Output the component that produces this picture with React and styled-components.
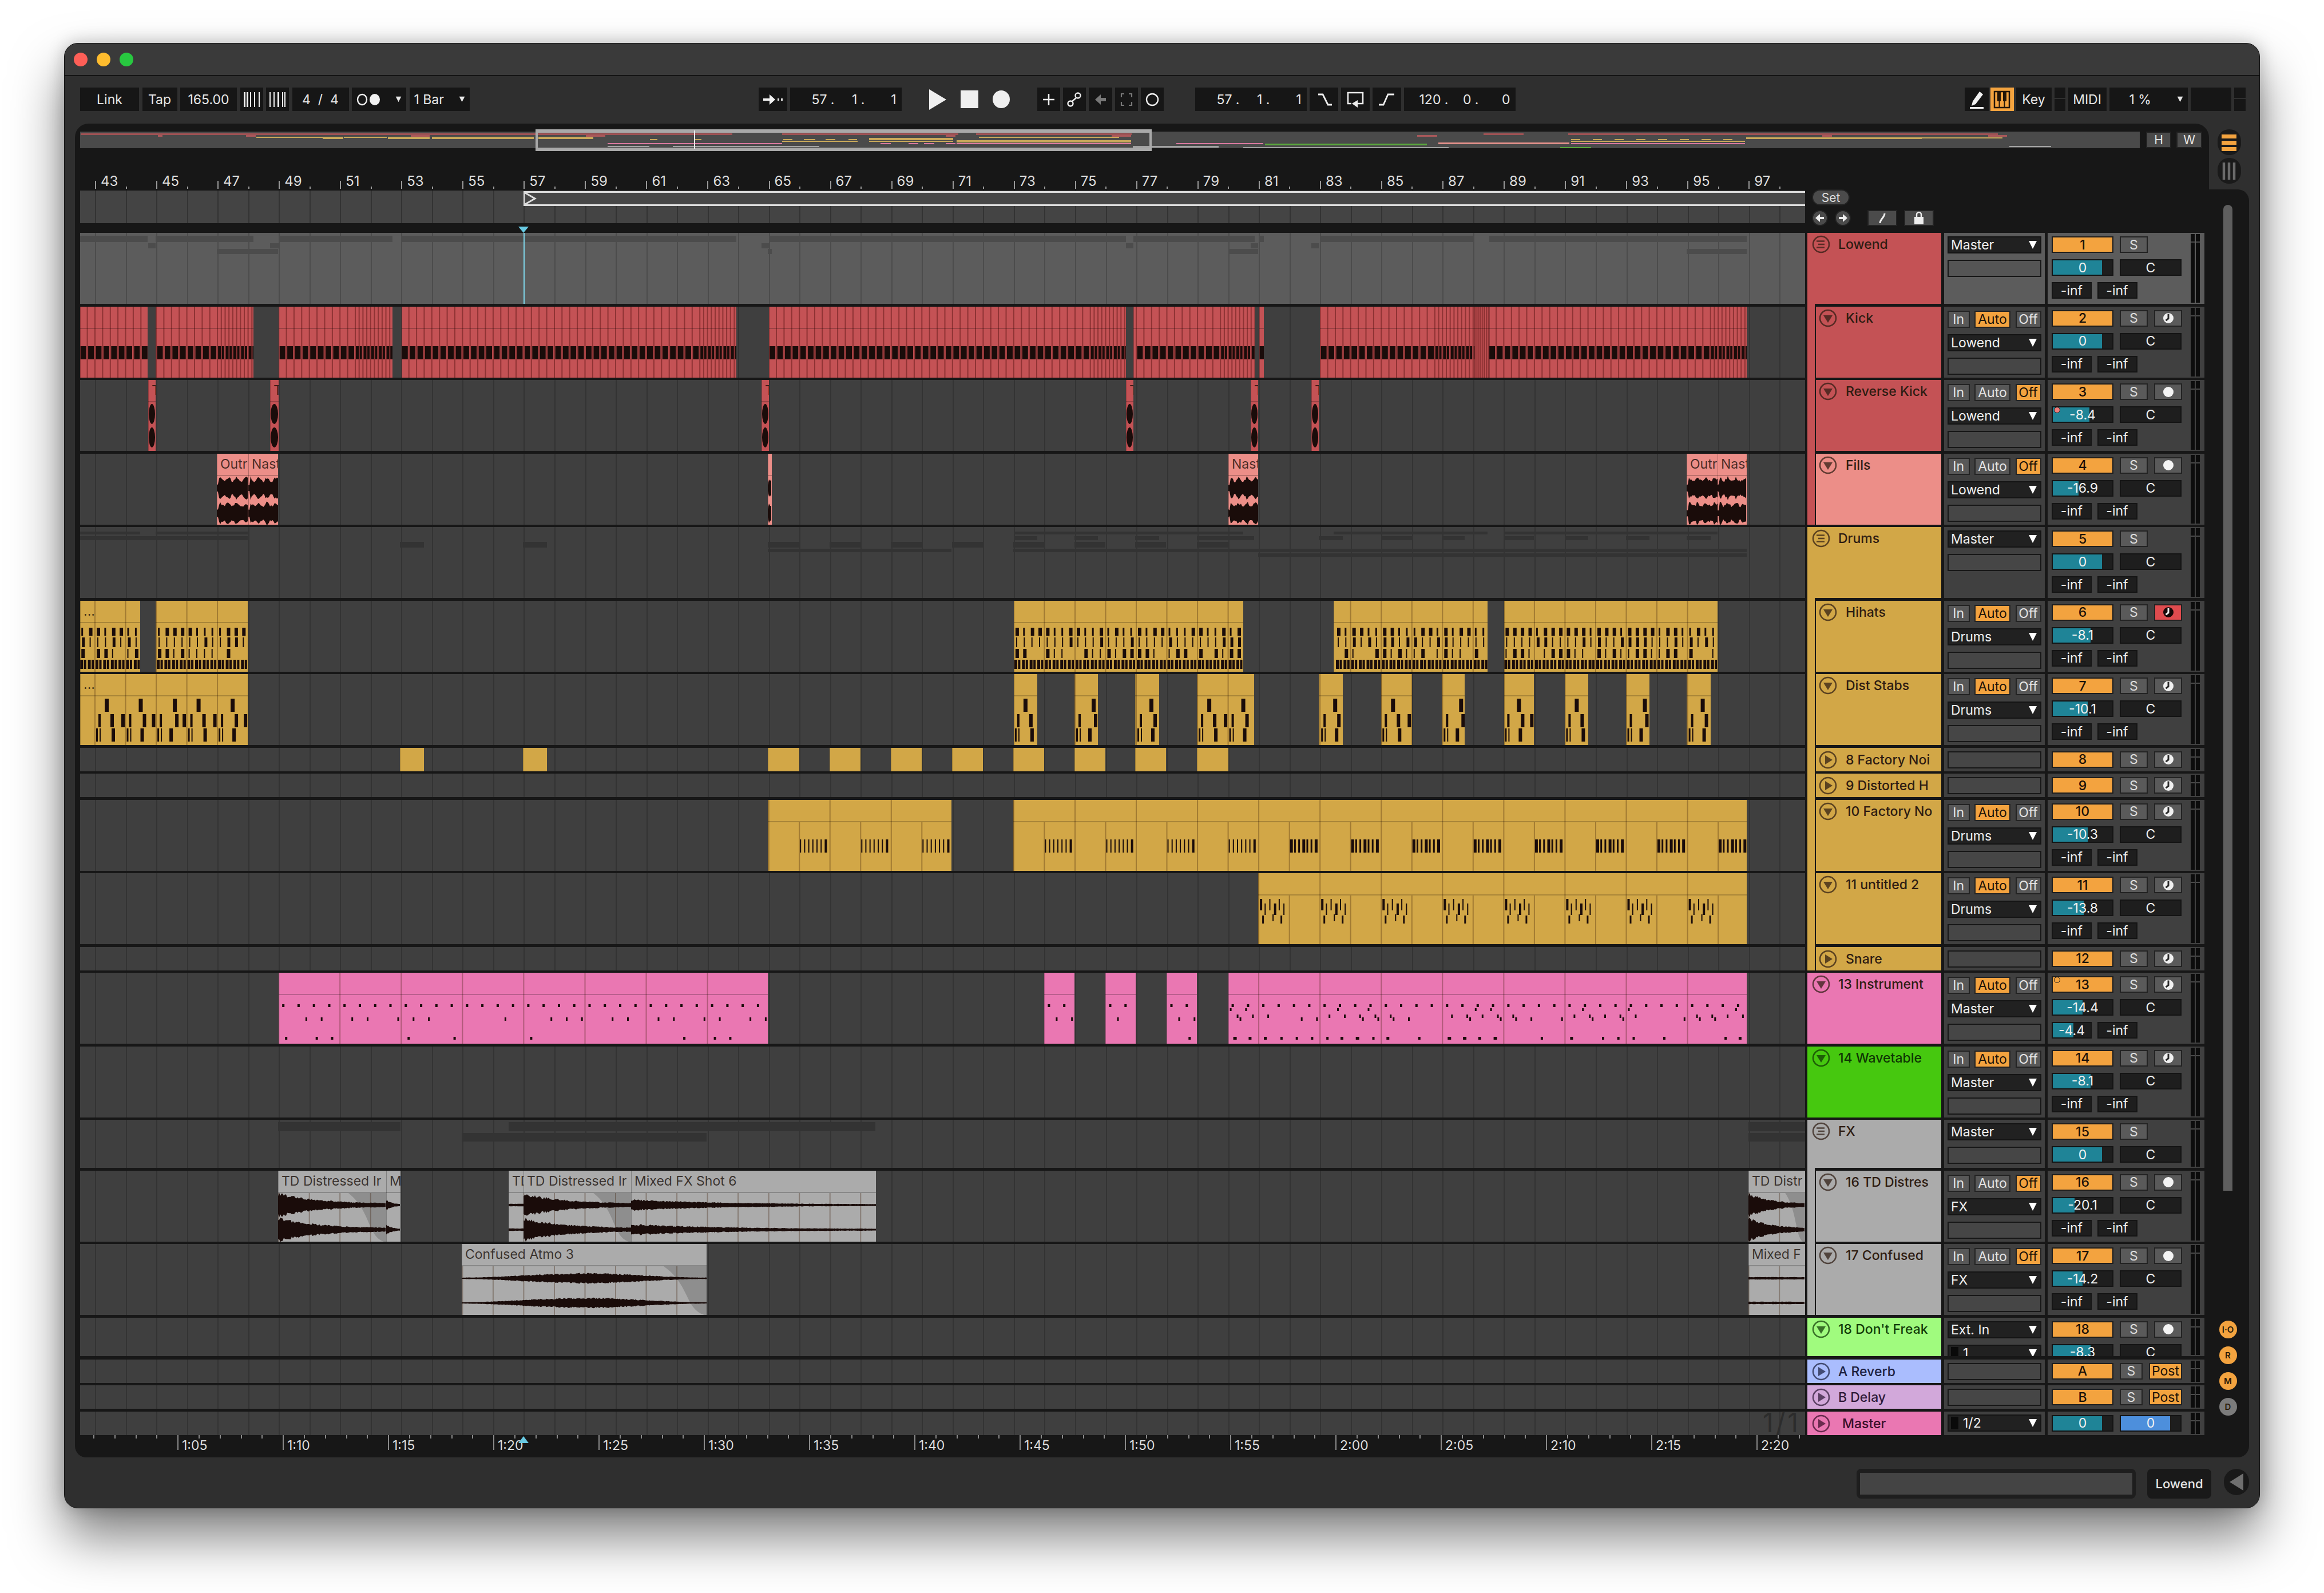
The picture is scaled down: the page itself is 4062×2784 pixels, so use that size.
import React from 'react';
import styled, { createGlobalStyle, css } from 'styled-components';

const RED = '#c45255';
const SALMON = '#ec8e88';
const GOLD = '#d2a747';
const PINK = '#ea77b2';
const GREY = '#ababab';
const ORANGE = '#f3a33f';
const TEAL = '#1f8497';
const BAR = 53.53;

const GlobalStyle = createGlobalStyle`
  html, body { margin: 0; padding: 0; background: #fff; }
  body { font-family: Inter, "Liberation Sans", sans-serif; }
  * { box-sizing: border-box; }
`;

// grid lines on a lane, one per bar, first one at page x 166
const barGrid = (line) => css`
  background-image: repeating-linear-gradient(90deg, transparent 0 ${BAR - 2}px, ${line} ${BAR - 2}px ${BAR}px);
  background-size: calc(100% + 60px) 100%;
  background-position: -25.5px 0;
  background-repeat: no-repeat;
`;

const Page = styled.div`
  width: 4062px;
  height: 2784px;
  padding: 75px 0 0 112px;
  overflow: hidden;
`;

const Window = styled.div`
  width: 3838px;
  height: 2561px;
  display: flex;
  flex-direction: column;
  background: #2f2f2f;
  border: 1px solid #151515;
  border-radius: 24px;
  box-shadow: 0 50px 90px rgba(0, 0, 0, 0.5), 0 0 30px rgba(0, 0, 0, 0.22);
  overflow: hidden;
  color: #e6e6e6;
`;

const TitleBar = styled.div`
  height: 57px;
  flex: none;
  display: flex;
  align-items: center;
  gap: 16px;
  padding-left: 16px;
  background: #3a3a3a;
  border-bottom: 2px solid #141414;
`;

const Light = styled.span`
  width: 24px;
  height: 24px;
  border-radius: 50%;
  background: ${(p) => p.$c};
`;

const Toolbar = styled.div`
  height: 83px;
  flex: none;
  display: flex;
  align-items: flex-start;
  padding: 20px 0 0 27px;
`;

const ToolGroup = styled.div`
  display: flex;
  gap: ${(p) => p.$gap || 5}px;
  margin-left: ${(p) => p.$ml || 0}px;
  height: 41px;
  align-items: center;
`;

const ToolBtn = styled.div`
  width: ${(p) => p.$w}px;
  height: 41px;
  flex: none;
  display: flex;
  align-items: center;
  justify-content: ${(p) => p.$justify || 'center'};
  gap: 4px;
  padding: ${(p) => (p.$justify ? '0 8px' : '0')};
  font-size: 23px;
  white-space: pre;
  background: ${(p) => (p.$on ? ORANGE : '#161616')};
`;

const PercentText = styled.span`
  margin-left: 27px;
`;

const PosBtn = styled(ToolBtn)`
  justify-content: flex-end;
  padding-right: 9px;
`;

const PosCell = styled.span`
  width: ${(p) => p.$w}px;
  text-align: right;
`;

const SplitBtn = styled.div`
  width: ${(p) => p.$w}px;
  height: 41px;
  flex: none;
  background: linear-gradient(#161616 0 18px, transparent 18px 20px, #161616 20px);
`;

const Main = styled.div`
  flex: 1;
  margin-left: 18px;
  width: 3800px;
  display: flex;
  flex-direction: column;
`;

const TopRow = styled.div`
  display: flex;
  height: 115px;
  flex: none;
`;

const TopPanel = styled.div`
  width: 3730px;
  padding: 14px 0 0 9px;
  background: #171717;
  border-radius: 24px 24px 0 0;
`;

const OverviewRow = styled.div`
  display: flex;
  height: 29px;
`;

const OverviewStrip = styled.div`
  position: relative;
  width: 3600px;
  height: 29px;
  background: #4a4a4a;
`;

const OverviewArt = styled.svg`
  display: block;
  width: 3600px;
  height: 29px;
`;

const Selection = styled.div`
  position: absolute;
  left: 796px;
  top: -4px;
  width: 1077px;
  height: 38px;
  border: solid #a9a9a9;
  border-width: 6px 4px;
`;

const OverviewCursor = styled.div`
  position: absolute;
  left: 1073px;
  top: -2px;
  width: 2px;
  height: 32px;
  background: #e8e8e8;
`;

const ZoomBtn = styled.div`
  width: ${(p) => p.$w}px;
  margin-left: ${(p) => p.$ml}px;
  height: 29px;
  display: flex;
  align-items: center;
  justify-content: center;
  font-size: 21px;
  background: #4a4a4a;
  border: 2px solid #222;
`;

const BarRuler = styled.div`
  display: flex;
  height: 30px;
  margin-top: 42px;
  padding-left: 26px;
`;

const BarMark = styled.div`
  position: relative;
  width: 107.06px;
  flex: none;
  padding-left: 10px;
  font-size: 24px;
  line-height: 32px;
  color: #dedede;

  &::before {
    content: '';
    position: absolute;
    left: 0;
    bottom: 1px;
    width: 2px;
    height: 14px;
    background: #9a9a9a;
  }

  &::after {
    content: '';
    position: absolute;
    left: 53.5px;
    bottom: 1px;
    width: 2px;
    height: 4px;
    background: #9a9a9a;
  }
`;

const SidePills = styled.div`
  width: 70px;
  display: flex;
  flex-direction: column;
  align-items: center;
  gap: 5px;
  padding-top: 10px;
`;

const SidePill = styled.div`
  width: 41px;
  height: 45px;
  display: flex;
  align-items: center;
  justify-content: center;
  background: #1a1a1a;
  border-radius: 20px;
`;

const LowerPanel = styled.div`
  flex: 1;
  display: flex;
  background: #171717;
  border-radius: 0 20px 20px 20px;
`;

const Tracks = styled.div`
  width: 3722px;
  flex: none;
  padding-left: 9px;
  display: flex;
  flex-direction: column;
`;

const TopStrip = styled.div`
  display: flex;
  height: 76px;
  flex: none;
`;

const LocatorArea = styled.div`
  position: relative;
  width: 3015px;
  height: 76px;
  padding-top: 2px;
`;

const LocatorStrip = styled.div`
  position: relative;
  height: 57px;
  background-color: #444;
  ${barGrid('#333')}
`;

const LoopBrace = styled.div`
  position: absolute;
  left: 775px;
  right: 0;
  top: 1px;
  height: 26px;
  background: #474747;
  border-top: 3px solid #dcdcdc;
  border-bottom: 3px solid #dcdcdc;
  display: flex;
  align-items: center;
`;

const DownMarker = styled.div`
  position: absolute;
  left: 766px;
  bottom: 0;
  width: 0;
  height: 0;
  border-left: 9px solid transparent;
  border-right: 9px solid transparent;
  border-top: 11px solid #68c9e2;
`;

const SetColumn = styled.div`
  margin-left: 12px;
  display: flex;
  flex-direction: column;
  gap: 8px;
`;

const SetPill = styled.div`
  width: 66px;
  height: 28px;
  display: flex;
  align-items: center;
  justify-content: center;
  font-size: 21px;
  color: #ddd;
  background: #4b4b4b;
  border: 2px solid #222;
  border-radius: 14px;
`;

const SetRow = styled.div`
  display: flex;
  align-items: center;
  gap: 12px;
`;

const ArrowPill = styled.div`
  width: 28px;
  height: 28px;
  display: flex;
  align-items: center;
  justify-content: center;
  background: #4b4b4b;
  border: 2px solid #222;
  border-radius: 50%;
`;

const SquareBtn = styled.div`
  width: 52px;
  height: 28px;
  margin-left: ${(p) => p.$ml || 0}px;
  display: flex;
  align-items: center;
  justify-content: center;
  background: #4b4b4b;
  border: 2px solid #222;
`;

const TrackRow = styled.div`
  display: flex;
  flex: none;
  height: ${(p) => p.$h}px;
  margin-bottom: ${(p) => p.$gap}px;
`;

const Lane = styled.div`
  position: relative;
  width: 3015px;
  flex: none;
  overflow: hidden;
  background-color: ${(p) => (p.$light ? '#5c5c5c' : '#3f3f3f')};
  ${(p) => barGrid(p.$light ? '#4c4c4c' : '#333')}
`;

const Stripe = styled.div`
  position: absolute;
  height: ${(p) => p.$h}px;
  top: ${(p) => p.$top}px;
  background: ${(p) => (p.$light ? '#4c4c4c' : '#333')};
`;

const Playhead = styled.div`
  position: absolute;
  left: 775px;
  top: 0;
  bottom: 0;
  width: 2px;
  background: #7fd4e8;
`;

const FaintText = styled.div`
  position: absolute;
  right: 8px;
  top: -5px;
  font-size: 46px;
  line-height: 48px;
  letter-spacing: 4px;
  color: #2c2c2c;
`;

const Clip = styled.div`
  position: absolute;
  top: 0;
  bottom: 0;
  overflow: hidden;
  background: ${(p) => p.$c};
  box-shadow: inset 1px 0 0 rgba(0, 0, 0, 0.25);
`;

const ClipHead = styled.div`
  position: relative;
  height: 39px;
  padding-left: 6px;
  font-size: 23px;
  line-height: 36px;
  white-space: nowrap;
  overflow: hidden;
  color: rgba(25, 15, 10, 0.78);
  border-bottom: 2px solid rgba(0, 0, 0, 0.2);
  z-index: 1;
`;

const ClipArt = styled.svg`
  position: absolute;
  left: 0;
  top: 0;
`;

const HeaderCell = styled.div`
  position: relative;
  width: 234px;
  margin-left: 4px;
  flex: none;
  display: flex;
  align-items: flex-start;
  padding: ${(p) => (p.$small ? 5 : 4)}px 0 0 ${(p) => (p.$indent ? 20 : 8)}px;
  gap: ${(p) => (p.$indent ? 15 : 14)}px;
  background: ${(p) => p.$c};
  font-size: 23px;
  font-weight: 500;
  line-height: 32px;
  white-space: nowrap;
  overflow: visible;
  color: ${(p) => p.$text || '#2e1c12'};

  ${(p) =>
    p.$indent &&
    css`
      &::before {
        content: '';
        position: absolute;
        left: 0;
        top: -5px;
        bottom: 0;
        width: 13px;
        background: ${p.$group};
        border-right: 2px solid #171717;
      }
    `}
`;

const MasterName = styled.span`
  margin-left: 7px;
`;

const RoutingCol = styled.div`
  width: 176px;
  margin-left: 5px;
  flex: none;
  padding: ${(p) => (p.$top ? p.$top : 7)}px 6px 0;
  display: flex;
  flex-direction: column;
  gap: 11px;
  overflow: hidden;
  background: ${(p) => (p.$light ? '#5c5c5c' : '#404040')};
`;

const MonitorRow = styled.div`
  display: flex;
  gap: 8.5px;
  height: 30px;
  flex: none;
`;

const Toggle = styled.div`
  width: ${(p) => p.$w}px;
  display: flex;
  align-items: center;
  justify-content: center;
  font-size: 23px;
  border: 2px solid #232323;
  background: ${(p) => (p.$on ? ORANGE : '#585858')};
  color: ${(p) => (p.$on ? '#1c1208' : '#e4e4e4')};
`;

const Dropdown = styled.div`
  height: 30px;
  flex: none;
  display: flex;
  align-items: center;
  justify-content: space-between;
  padding: 0 6px 0 4px;
  font-size: 23px;
  background: #212121;
  border: 2px solid #141414;
  color: #f0f0f0;
`;

const DropLabel = styled.span`
  display: flex;
  align-items: center;
  gap: 8px;
`;

const MiniMeter = styled.span`
  width: 13px;
  height: 22px;
  background: #0a0a0a;
`;

const EmptyField = styled.div`
  height: 30px;
  flex: none;
  background: ${(p) => (p.$light ? '#555' : '#464646')};
  border: 2px solid #171717;
`;

const MixCol = styled.div`
  width: 274px;
  margin-left: 5px;
  flex: none;
  display: flex;
  overflow: hidden;
  background: ${(p) => (p.$light ? '#5c5c5c' : '#404040')};
`;

const MixControls = styled.div`
  width: 227px;
  margin-left: 7px;
  padding-top: 6px;
  flex: none;
  display: flex;
  flex-direction: column;
  gap: 11px;
`;

const MixRow = styled.div`
  display: flex;
  gap: ${(p) => p.$gap || 11}px;
  height: 29px;
  flex: none;
`;

const NumBox = styled.div`
  position: relative;
  width: 108px;
  flex: none;
  display: flex;
  align-items: center;
  justify-content: center;
  font-size: 23px;
  font-weight: 500;
  color: #1c1208;
  background: ${ORANGE};
  border: 2px solid #1e1e1e;
`;

const SmallBtn = styled.div`
  width: ${(p) => p.$w || 49}px;
  flex: none;
  display: flex;
  align-items: center;
  justify-content: center;
  font-size: 23px;
  color: ${(p) => (p.$on ? '#1c1208' : '#dcdcdc')};
  background: ${(p) => (p.$on ? ORANGE : p.$alert ? '#df4b4e' : '#5a5a5a')};
  border: 2px solid #232323;
`;

const Slider = styled.div`
  position: relative;
  width: 108px;
  flex: none;
  display: flex;
  align-items: center;
  justify-content: center;
  font-size: 23px;
  color: #f2f2f2;
  background: #1e1e1e;
  border: 2px solid #141414;
  overflow: hidden;
`;

const SliderFill = styled.div`
  position: absolute;
  left: 0;
  top: 0;
  bottom: 0;
  background: ${(p) => p.$c || TEAL};
`;

const SliderText = styled.span`
  position: relative;
`;

const RedDot = styled.span`
  position: absolute;
  left: 2px;
  top: -1px;
  width: 11px;
  height: 11px;
  border-radius: 50%;
  background: ${(p) => p.$c || '#ee7d7b'};
  border: 1px solid #222;
`;

const DarkBox = styled.div`
  position: relative;
  overflow: hidden;
  width: ${(p) => p.$w}px;
  flex: none;
  display: flex;
  align-items: center;
  justify-content: center;
  font-size: 23px;
  color: #eee;
  background: #1e1e1e;
  border: 2px solid #141414;
`;

const MeterPair = styled.div`
  margin: 2px 0 2px 16px;
  width: 16px;
  flex: none;
  display: flex;
  gap: 2px;
`;

const MeterBar = styled.div`
  flex: 1;
  background: linear-gradient(#0c0c0c 0 13px, #4a4a4a 13px 15px, #0c0c0c 15px);
`;

const TimeRuler = styled.div`
  display: flex;
  position: relative;
  width: 3015px;
  height: 39px;
  padding-left: 170px;
  background-image: repeating-linear-gradient(90deg, #8a8a8a 0 2px, transparent 2px 36.8px);
  background-size: 100% 6px;
  background-position: 22.8px 0;
  background-repeat: no-repeat;
`;

const TimeMark = styled.div`
  position: relative;
  width: 184px;
  flex: none;
  padding-left: 8px;
  font-size: 23px;
  line-height: 36px;
  color: #dedede;

  &::before {
    content: '';
    position: absolute;
    left: 0;
    top: 0;
    width: 2px;
    height: 26px;
    background: #8a8a8a;
  }
`;

const UpMarker = styled.div`
  position: absolute;
  left: 766px;
  top: 2px;
  width: 0;
  height: 0;
  border-left: 9px solid transparent;
  border-right: 9px solid transparent;
  border-bottom: 12px solid #68c9e2;
`;

const RightRail = styled.div`
  flex: 1;
  display: flex;
  flex-direction: column;
  padding-top: 27px;
`;

const ScrollThumb = styled.div`
  width: 16px;
  height: 1723px;
  margin: 0 0 227px 33px;
  background: #5e5e5e;
  border-radius: 8px 8px 0 0;
`;

const ViewPill = styled.div`
  width: 31px;
  height: 31px;
  margin: 0 0 14px 25.5px;
  display: flex;
  align-items: center;
  justify-content: center;
  font-size: 15px;
  font-weight: 600;
  border-radius: 50%;
  color: #2a1a08;
  background: ${(p) => (p.$off ? '#7c7c7c' : ORANGE)};
`;

const BottomBar = styled.div`
  flex: 1;
  display: flex;
  justify-content: flex-end;
  align-items: flex-start;
  padding: 20px 0 0 0;
`;

const InfoField = styled.div`
  width: 488px;
  height: 52px;
  padding: 7px 6px;
  background: #1e1e1e;
  border-radius: 8px;
`;

const InfoInner = styled.div`
  height: 38px;
  background: #444;
`;

const TrackName = styled.div`
  width: 112px;
  height: 52px;
  margin-left: 20px;
  display: flex;
  align-items: center;
  justify-content: center;
  font-size: 22px;
  font-weight: 500;
  background: #191919;
  border-radius: 8px;
`;

const CollapsePill = styled.div`
  width: 44px;
  height: 46px;
  margin-left: 22px;
  display: flex;
  align-items: center;
  justify-content: center;
  background: #191919;
  border-radius: 22px;
`;

/* ---------- drawings ---------- */

const Tri = ({ w = 14, h = 16, c = '#fff' }) => (
  <svg width={w} height={h} viewBox="0 0 14 16">
    <polygon points="0,1 14,1 7,15" fill={c} />
  </svg>
);

const Fold = ({ kind }) => (
  <svg width="32" height="32" viewBox="0 0 32 32" style={{ flex: 'none', opacity: 0.72 }}>
    <circle cx="16" cy="16" r="14" fill="none" stroke="currentColor" strokeWidth="2.6" />
    {kind === 'down' && <polygon points="8,11 24,11 16,24" fill="currentColor" />}
    {kind === 'right' && <polygon points="11,8 24,16 11,24" fill="currentColor" />}
    {kind === 'group' && <path d="M8 10.5h14M11 16h11M8 21.5h14" stroke="currentColor" strokeWidth="2.4" />}
  </svg>
);

const Disc = () => (
  <svg width="22" height="22" viewBox="0 0 22 22">
    <circle cx="11" cy="11" r="9" fill="#f4f4f4" />
  </svg>
);

const Clock = ({ alert }) => (
  <svg width="22" height="22" viewBox="0 0 22 22">
    <circle cx="11" cy="11" r="9" fill={alert ? '#160808' : '#f0f0f0'} />
    <path d="M11 3.5v8.2l-4.5 3.4" fill="none" stroke={alert ? '#f0f0f0' : '#2a2a2a'} strokeWidth="3" />
  </svg>
);

const BarsIcon = ({ flip }) => (
  <svg width="32" height="30" viewBox="0 0 32 30">
    {(flip ? [[2, 2], [9, 2], [16, 3], [24, 2], [28, 2]] : [[2, 3], [7, 3], [13, 2], [20, 2], [28, 2]]).map(([x, w]) => (
      <rect key={x} x={x} y="2" width={w} height="26" fill="#f2f2f2" />
    ))}
  </svg>
);

const KeyIcon = () => (
  <svg width="30" height="32" viewBox="0 0 30 32">
    <rect x="2" y="2" width="26" height="28" fill="none" stroke="#241608" strokeWidth="2.5" />
    <path d="M10.5 2v28M19.5 2v28" stroke="#241608" strokeWidth="2" />
    <rect x="7" y="2" width="6" height="17" fill="#241608" />
    <rect x="17" y="2" width="6" height="17" fill="#241608" />
  </svg>
);

const PathIcon = ({ d, w = 30, h = 30, c = '#ededed', sw = 2.6 }) => (
  <svg width={w} height={h} viewBox="0 0 30 30">
    <path d={d} fill="none" stroke={c} strokeWidth={sw} />
  </svg>
);

const OVERVIEW = (() => {
  const red = '#a8585a';
  const pk = '#d9799f';
  const yl = '#c9a85a';
  const gy = '#a2a2a2';
  const rows = [
    [141, 936, 3, 3, '#a05254'], [936, 1280, 3, 3, '#a05254'], [1367, 1675, 3, 3, '#a05254'], [1706, 1978, 3, 3, '#a05254'],
    [2593, 2663, 3, 3, '#a05254'], [2741, 3492, 3, 3, '#a05254'],
    [276, 284, 6, 3, red], [430, 447, 6, 3, red], [718, 751, 6, 3, red], [1024, 1058, 6, 3, red], [1653, 1670, 6, 3, red],
    [1943, 1977, 6, 3, red], [2477, 2512, 6, 3, red], [3185, 3202, 6, 3, red], [3475, 3508, 6, 3, red],
    [448, 564, 9, 2, yl], [564, 600, 9, 4, yl], [601, 676, 9, 2, yl], [678, 751, 9, 4, yl], [755, 933, 9, 4, yl], [941, 1037, 9, 4, yl],
    [1136, 1149, 13, 2, yl], [1215, 1226, 13, 2, yl], [1369, 1385, 13, 2, yl], [1405, 1425, 13, 2, yl], [1443, 1460, 13, 2, yl], [1483, 1498, 13, 2, yl],
    [1367, 1499, 16, 2, yl], [1519, 1666, 11, 4, yl], [1519, 1666, 16, 2, yl], [1711, 1956, 9, 2, yl], [1672, 1977, 15, 4, yl],
    [2746, 3050, 16, 2, yl], [3052, 3359, 10, 3, yl], [3359, 3500, 10, 2, yl],
    [1062, 1367, 20, 2, pk], [1539, 1557, 20, 2, pk], [1588, 1605, 20, 2, pk], [1615, 1633, 20, 2, pk], [1653, 1670, 20, 2, pk], [1672, 1977, 20, 2, pk],
    [2056, 2208, 20, 2, pk], [2746, 3050, 20, 2, pk], [2514, 2743, 19, 3, '#e2908a'],
    [2211, 2494, 21, 3, '#5aa83c'], [2727, 2781, 27, 2, '#5aa83c'],
    [1062, 1135, 25, 2, gy], [1176, 1432, 25, 2, gy], [1980, 2130, 25, 3, gy], [2173, 2532, 27, 2, gy], [3512, 3585, 25, 2, gy],
  ];
  for (let i = 0; i < 8; i += 1) rows.push([2746 + i * 38, 2762 + i * 38, 13, 2, yl]);
  return rows;
})();

const rect = (x, y, w, h) => `M${x.toFixed(1)} ${y}h${w}v${h}h${-w}z`;

const rng = (seed) => {
  let s = seed;
  return () => {
    s = (s * 16807) % 2147483647;
    return s / 2147483647;
  };
};

const stepsIn = (x1, x2, step) => {
  const out = [];
  let k = Math.ceil((x1 - 168) / step);
  for (; 166 + k * step < x2; k += 1) out.push({ k, x: 166 + k * step - x1 });
  return out;
};

const wavePath = (w, centres, env, seed) => {
  const rand = rng(seed);
  let d = '';
  centres.forEach((cy) => {
    const top = [];
    const bot = [];
    for (let x = 0; x <= w; x += 2) {
      const a = env(x / w) * (0.82 + rand() * 0.36);
      top.push(`${x} ${(cy - a).toFixed(1)}`);
      bot.unshift(`${x} ${(cy + a).toFixed(1)}`);
    }
    d += `M${top.concat(bot).join('L')}z`;
  });
  return d;
};

const drawClip = (art, x1, x2, h) => {
  const w = x2 - x1;
  const rand = rng(Math.round(x1) * 37 + 11);
  let notes = '';
  let grid = '';
  let head = '';
  let fade = '';
  const barLines = () => stepsIn(x1, x2, BAR).forEach(({ x }) => { grid += `M${x.toFixed(1)} 39V${h}`; });

  if (art === 'kick') {
    stepsIn(x1, x2, BAR / 4).forEach(({ x }) => {
      grid += `M${x.toFixed(1)} 0V${h}`;
      if (w > 150 && x > w - 70) {
        notes += rect(x + 1, 69, 5, 23) + rect(x + 7.7, 69, 4, 23);
        grid += `M${(x + 6.7).toFixed(1)} 0V${h}`;
      } else {
        notes += rect(x + 1.5, 69, 10, 23);
      }
    });
  }
  if (art === 'kickDim') {
    stepsIn(x1, x2, BAR / 16).forEach(({ x }) => { grid += `M${x.toFixed(1)} 0V${h}`; });
  }
  if (art === 'reverse') {
    [59.5, 100.5].forEach((cy) => {
      notes += `M1 ${cy}a${w / 2 - 1} 17.5 0 1 0 ${w - 2} 0a${w / 2 - 1} 17.5 0 1 0 ${-(w - 2)} 0z`;
    });
  }
  if (art === 'fill') {
    notes = wavePath(w, [60, 104], (t) => (t < 0.06 ? 6 : 15 + 3 * Math.sin(t * 22)), x1);
  }
  if (art === 'hat') {
    barLines();
    stepsIn(x1, x2, BAR).forEach(({ x }) => { head += `M${x.toFixed(1)} 0V39`; });
    stepsIn(x1, x2, BAR / 4).forEach(({ x }) => {
      notes += rect(x + 3, 47, rand() > 0.5 ? 6 : 3, 14);
      notes += rect(x + 4, 64, rand() > 0.7 ? 5 : 2, 17);
      if (rand() > 0.25) notes += rect(x + 3, 84, rand() > 0.5 ? 6 : 2, 16);
      notes += rect(x + 1, 103, 5, 16) + rect(x + 7.5, 103, 4, 16);
    });
  }
  if (art === 'stab') {
    barLines();
    stepsIn(x1, x2, BAR).forEach(({ x, k }) => {
      head += `M${x.toFixed(1)} 0V39`;
      const shift = (k % 3) * 3;
      notes += rect(x + 17 + shift * 2, 43, 7, 23);
      notes += rect(x + 6, 70, 4, 23) + rect(x + 27 + shift, 70, 6, 23) + rect(x + 46, 70, 6, 23);
      notes += rect(x + 2, 95, 3, 23) + rect(x + 8, 95, 2, 23) + rect(x + 29 - shift, 95, 6, 23);
    });
  }
  if (art === 'factory') {
    stepsIn(x1, x2, BAR).forEach(({ x, k }) => {
      grid += `M${x.toFixed(1)} 39V${h}`;
      if (k % 2 === 0) head += `M${x.toFixed(1)} 0V39`;
      if (k % 2 === 0) return;
      const dense = x + x1 > 2240;
      for (let i = 0; i < 7; i += 1) {
        const tw = dense ? (i % 3 === 0 ? 5 : 3) : i === 6 ? 4 : 2;
        notes += rect(x + 1 + i * 7.2, 69, tw, 23);
      }
    });
  }
  if (art === 'untitled') {
    stepsIn(x1, x2, BAR).forEach(({ x, k }) => {
      grid += `M${x.toFixed(1)} 39V${h}`;
      if (k % 2 === 0) {
        head += `M${x.toFixed(1)} 0V39`;
        for (let i = 0; i < 6; i += 1) notes += rect(x + 2 + i * 8.2, 45 + (i % 2) * 8, i % 3 === 0 ? 4 : 2, 20);
        notes += rect(x + 6, 74, 3, 14) + rect(x + 24, 72, 2, 12) + rect(x + 38, 74, 3, 14);
      }
    });
  }
  if (art === 'dots') {
    stepsIn(x1, x2, BAR * 2).forEach(({ x }) => {
      grid += `M${x.toFixed(1)} 39V${h}`;
      head += `M${x.toFixed(1)} 0V39`;
    });
    stepsIn(x1, x2, BAR / 2).forEach(({ x, k }) => {
      const dense = x + x1 > 2140 && k % 8 < 5;
      notes += rect(x + 6, 55, 4, 5);
      if (rand() > 0.4) notes += rect(x + 20, 78, 3, 6);
      if (rand() > 0.55) notes += rect(x + 11, 112, 4, 5);
      if (dense) {
        notes += rect(x + 15, 73, 3, 6);
        if (rand() > 0.4) notes += rect(x + 3, 62, 3, 5);
        if (rand() > 0.4) notes += rect(x + 9, 112, 5, 5);
      }
    });
  }
  if (art === 'decay' || art === 'shot' || art === 'thin' || art === 'bell') {
    barLines();
    const envs = {
      decay: (t) => 2 + 17 * Math.exp(-2.6 * t),
      shot: (t) => 1 + 8 * Math.exp(-2.6 * t),
      thin: () => 2,
      bell: (t) => 1.2 + 7 * Math.sin(Math.PI * t) ** 2,
    };
    notes = wavePath(w, [60, 103], envs[art], x1);
    if (art === 'decay' || art === 'bell') {
      const f = Math.min(75, w * 0.35);
      fade = `M${w - f} 39C${w - f * 0.4} 70 ${w - f * 0.5} ${h - 10} ${w - 4} ${h}L${w} ${h}L${w} 39z`;
    }
  }
  return { notes, grid, head, fade };
};

const ClipView = ({ clip, color, h }) => {
  const [x1, x2, label, art] = clip;
  const w = x2 - x1;
  const d = art ? drawClip(art, x1, x2, h) : null;
  const isKick = art === 'kick' || art === 'kickDim';
  const line = isKick ? 'rgba(90,20,20,0.5)' : 'rgba(60,30,10,0.33)';
  return (
    <Clip $c={color} style={{ left: x1 - 140, width: w }}>
      {art && <ClipHead>{label}</ClipHead>}
      {d && (
        <ClipArt width={w} height={h}>
          <path d={d.fade} fill="rgba(0,0,0,0.17)" />
          <path d={d.grid} stroke={line} strokeWidth="2" fill="none" />
          <path d={d.head} stroke={line} strokeWidth="2" fill="none" />
          <path d={d.notes} fill="#1a0c0a" />
        </ClipArt>
      )}
    </Clip>
  );
};

/* ---------- song data ---------- */

const KICK = [[140, 258], [272, 443], [487, 686], [702, 1287], [1344, 1968], [1981, 2193], [2201, 2209], [2307, 2577], [2603, 3053]];
const REVERSE = [[259, 272], [472, 487], [1331, 1344], [1968, 1981], [2186, 2199], [2292, 2305]];
const HATS = [[140, 245], [272, 433], [1772, 2173], [2331, 2600], [2629, 3002]];
const STABS = [[140, 433], [1772, 1813], [1878, 1919], [1984, 2026], [2092, 2192], [2305, 2347], [2414, 2468], [2520, 2560], [2629, 2681], [2735, 2776], [2842, 2883], [2948, 2990]];
const NOISE = [[699, 741], [914, 956], [1342, 1397], [1450, 1504], [1557, 1611], [1664, 1718], [1771, 1825], [1878, 1932], [1984, 2038], [2092, 2147]];
const FACTORY = [[1342, 1663], [1771, 3053]];
const INSTR = [[487, 1342], [1825, 1878], [1932, 1985], [2039, 2092], [2147, 3053]];

const withArt = (list, art, label = '') => list.map(([a, b], i) => [a, b, i === 0 ? label : '', art]);

const TRACKS = [
  {
    name: 'Lowend', h: 124, gap: 4.5, color: RED, fold: 'group', light: true, input: 'Master', num: '1', vol: '0', pct: 83, group: true, playhead: true,
    stripes: [
      ...KICK.map(([a, b]) => [a, b, 5, 11]),
      ...REVERSE.map(([a, b]) => [a, b, 18, 9]),
      [379, 486, 28, 9], [1342, 1349, 28, 9], [2147, 2199, 28, 9], [2948, 3053, 28, 9],
    ],
  },
  {
    name: 'Kick', h: 124, gap: 4.5, color: RED, parent: RED, fold: 'down', mon: 'Auto', input: 'Lowend', num: '2', vol: '0', pct: 83, btn: 'clock',
    clips: [...withArt(KICK, 'kick'), [2577, 2603, '', 'kickDim']],
  },
  {
    name: 'Reverse Kick', h: 124, gap: 4.5, color: RED, parent: RED, fold: 'down', mon: 'Off', input: 'Lowend', num: '3', vol: '-8.4', pct: 62, btn: 'disc', dot: true,
    clips: REVERSE.map(([a, b]) => [a, b, 'T', 'reverse']),
  },
  {
    name: 'Fills', h: 124, gap: 4.5, color: SALMON, parent: RED, fold: 'down', mon: 'Off', input: 'Lowend', num: '4', vol: '-16.9', pct: 43, btn: 'disc',
    clips: [[379, 434, 'Outr', 'fill'], [434, 486, 'Nast', 'fill'], [1342, 1349, '', 'fill'], [2147, 2199, 'Nast', 'fill'], [2948, 3002, 'Outr', 'fill'], [3002, 3053, 'Nast', 'fill']],
  },
  {
    name: 'Drums', h: 124, gap: 4.5, color: GOLD, fold: 'group', input: 'Master', num: '5', vol: '0', pct: 83, group: true,
    stripes: [
      ...HATS.map(([a, b]) => [a, b, 8, 5]),
      ...STABS.map(([a, b]) => [a, b, 16, 7]),
      ...NOISE.map(([a, b]) => [a, b, 26, 10]),
      ...FACTORY.map(([a, b]) => [a, b, 38, 6]),
      [2199, 3053, 46, 6],
    ],
  },
  {
    name: 'Hihats', h: 124, gap: 4.5, color: GOLD, parent: GOLD, fold: 'down', mon: 'Auto', input: 'Drums', num: '6', vol: '-8.1', pct: 63, btn: 'alert',
    clips: withArt(HATS, 'hat', '...'),
  },
  {
    name: 'Dist Stabs', h: 124, gap: 4.5, color: GOLD, parent: GOLD, fold: 'down', mon: 'Auto', input: 'Drums', num: '7', vol: '-10.1', pct: 59, btn: 'clock',
    clips: withArt(STABS, 'stab', '...'),
  },
  { name: '8 Factory Noi', h: 41, gap: 4.5, color: GOLD, parent: GOLD, fold: 'right', num: '8', btn: 'clock', small: true, clips: NOISE.map(([a, b]) => [a, b]) },
  { name: '9 Distorted H', h: 41, gap: 4.5, color: GOLD, parent: GOLD, fold: 'right', num: '9', btn: 'clock', small: true },
  {
    name: '10 Factory No', h: 124, gap: 4.5, color: GOLD, parent: GOLD, fold: 'down', mon: 'Auto', input: 'Drums', num: '10', vol: '-10.3', pct: 59, btn: 'clock',
    clips: withArt(FACTORY, 'factory'),
  },
  {
    name: '11 untitled 2', h: 124, gap: 4.5, color: GOLD, parent: GOLD, fold: 'down', mon: 'Auto', input: 'Drums', num: '11', vol: '-13.8', pct: 52, btn: 'clock',
    clips: withArt([[2199, 3053]], 'untitled'),
  },
  { name: 'Snare', h: 41, gap: 4.5, color: GOLD, parent: GOLD, fold: 'right', num: '12', btn: 'clock', small: true },
  {
    name: '13 Instrument', h: 124, gap: 4.5, color: PINK, fold: 'down', mon: 'Auto', input: 'Master', num: '13', vol: '-14.4', pct: 50, btn: 'clock', peak: '-4.4', numDot: true,
    clips: withArt(INSTR, 'dots'),
  },
  { name: '14 Wavetable', h: 124, gap: 4.5, color: '#46c80f', text: '#0f3604', fold: 'down', mon: 'Auto', input: 'Master', num: '14', vol: '-8.1', pct: 63, btn: 'clock' },
  {
    name: 'FX', h: 84, gap: 4.5, color: GREY, fold: 'group', input: 'Master', num: '15', vol: '0', pct: 83, group: true,
    stripes: [[486, 700, 4, 16], [889, 1530, 4, 16], [3056, 3155, 4, 16], [807, 1235, 23, 15], [3056, 3155, 23, 15]],
  },
  {
    name: '16 TD Distres', h: 124, gap: 4.5, color: GREY, parent: GREY, fold: 'down', mon: 'Off', input: 'FX', num: '16', vol: '-20.1', pct: 37, btn: 'disc',
    clips: [[486, 675, 'TD Distressed Ir', 'decay'], [675, 700, 'Mixed', 'shot'], [889, 915, 'TD', 'thin'], [915, 1103, 'TD Distressed Ir', 'decay'], [1103, 1531, 'Mixed FX Shot 6', 'shot'], [3056, 3155, 'TD Distr', 'decay']],
  },
  {
    name: '17 Confused', h: 124, gap: 4.5, color: GREY, parent: GREY, fold: 'down', mon: 'Off', input: 'FX', num: '17', vol: '-14.2', pct: 50, btn: 'disc',
    clips: [[807, 1235, 'Confused Atmo 3', 'bell'], [3056, 3155, 'Mixed F', 'thin']],
  },
  { name: "18 Don't Freak", h: 67, gap: 6, color: '#a0fb7e', text: '#123c08', fold: 'down', input: 'Ext. In', input2: '1', num: '18', vol: '-8.3', pct: 63, btn: 'disc', tall: true },
  { name: 'A Reverb', h: 41, gap: 4.5, color: '#aabdfe', text: '#1c2140', fold: 'right', num: 'A', send: true, small: true },
  { name: 'B Delay', h: 41, gap: 4.5, color: '#d2a8da', text: '#2e1a38', fold: 'right', num: 'B', send: true, small: true },
  { name: 'Master', h: 41, gap: 0, color: PINK, text: '#3a0f2a', fold: 'right', master: true, small: true, faint: '1/1' },
];

const BAR_NUMBERS = Array.from({ length: 28 }, (_, i) => 43 + i * 2);
const TIMES = ['1:05', '1:10', '1:15', '1:20', '1:25', '1:30', '1:35', '1:40', '1:45', '1:50', '1:55', '2:00', '2:05', '2:10', '2:15', '2:20'];

const BtnIcon = ({ kind }) => {
  if (kind === 'disc') return <Disc />;
  if (kind === 'alert') return <Clock alert />;
  return <Clock />;
};

const Position = ({ w, values }) => (
  <PosBtn $w={w}>
    <span>{values[0]}</span>
    <PosCell $w={49}>{values[1]}</PosCell>
    <PosCell $w={51}>{values[2]}</PosCell>
  </PosBtn>
);

const Routing = ({ t }) => {
  if (t.master) {
    return (
      <RoutingCol $top={5}>
        <Dropdown>
          <DropLabel><MiniMeter />1/2</DropLabel>
          <Tri />
        </Dropdown>
      </RoutingCol>
    );
  }
  if (t.small) {
    return (
      <RoutingCol $top={6}>
        <EmptyField />
      </RoutingCol>
    );
  }
  return (
    <RoutingCol $light={t.light} $top={t.mon ? 7 : 6}>
      {t.mon && (
        <MonitorRow>
          <Toggle $w={38.5}>In</Toggle>
          <Toggle $w={63} $on={t.mon === 'Auto'}>Auto</Toggle>
          <Toggle $w={45} $on={t.mon === 'Off'}>Off</Toggle>
        </MonitorRow>
      )}
      <Dropdown>
        {t.input}
        <Tri />
      </Dropdown>
      {t.input2 ? (
        <Dropdown>
          <DropLabel><MiniMeter />{t.input2}</DropLabel>
          <Tri />
        </Dropdown>
      ) : (
        <EmptyField $light={t.light} />
      )}
    </RoutingCol>
  );
};

const Mixer = ({ t }) => {
  if (t.master) {
    return (
      <MixCol>
        <MixControls>
          <MixRow>
            <Slider><SliderFill style={{ width: '83%' }} /><SliderText>0</SliderText></Slider>
            <Slider><SliderFill $c="#4d8fdc" style={{ width: '83%' }} /><SliderText>0</SliderText></Slider>
          </MixRow>
        </MixControls>
        <MeterPair><MeterBar /><MeterBar /></MeterPair>
      </MixCol>
    );
  }
  return (
    <MixCol $light={t.light}>
      <MixControls>
        <MixRow>
          <NumBox>
            {t.numDot && <RedDot $c={ORANGE} />}
            {t.num}
          </NumBox>
          {t.send ? (
            <>
              <SmallBtn $w={40}>S</SmallBtn>
              <SmallBtn $w={58} $on>Post</SmallBtn>
            </>
          ) : (
            <>
              <SmallBtn>S</SmallBtn>
              {t.btn && <SmallBtn $alert={t.btn === 'alert'}><BtnIcon kind={t.btn} /></SmallBtn>}
            </>
          )}
        </MixRow>
        {t.vol && (
          <MixRow>
            <Slider>
              <SliderFill style={{ width: `${t.pct}%` }} />
              {t.dot && <RedDot />}
              <SliderText>{t.vol}</SliderText>
            </Slider>
            <DarkBox $w={108}>C</DarkBox>
          </MixRow>
        )}
        {t.vol && !t.tall && (
          <MixRow $gap={9.5}>
            {t.peak ? (
              <DarkBox $w={70}>
                <SliderFill style={{ width: '55%' }} />
                <SliderText>{t.peak}</SliderText>
              </DarkBox>
            ) : (
              <DarkBox $w={70}>-inf</DarkBox>
            )}
            <DarkBox $w={70}>-inf</DarkBox>
          </MixRow>
        )}
      </MixControls>
      <MeterPair><MeterBar /><MeterBar /></MeterPair>
    </MixCol>
  );
};

const Track = ({ t }) => (
  <TrackRow $h={t.h} $gap={t.gap}>
    <Lane $light={t.light}>
      {(t.stripes || []).map(([a, b, top, h]) => (
        <Stripe key={`${a}-${top}`} $top={top} $h={h} $light={t.light} style={{ left: a - 140, width: b - a }} />
      ))}
      {(t.clips || []).map((clip) => (
        <ClipView key={clip[0]} clip={clip} color={t.color} h={t.h} />
      ))}
      {t.playhead && <Playhead />}
      {t.faint && <FaintText>{t.faint}</FaintText>}
    </Lane>
    <HeaderCell $c={t.color} $indent={!!t.parent} $group={t.parent} $text={t.text} $small={t.small}>
      <Fold kind={t.fold} />
      {t.master ? <MasterName>{t.name}</MasterName> : t.name}
    </HeaderCell>
    <Routing t={t} />
    <Mixer t={t} />
  </TrackRow>
);

const App = () => (
  <Page>
    <GlobalStyle />
    <Window>
      <TitleBar>
        <Light $c="#fe5f57" />
        <Light $c="#febc2e" />
        <Light $c="#28c840" />
      </TitleBar>

      <Toolbar>
        <ToolGroup $gap={5.5}>
          <ToolBtn $w={103}>Link</ToolBtn>
          <ToolBtn $w={61}>Tap</ToolBtn>
          <ToolBtn $w={99}>165.00</ToolBtn>
          <ToolBtn $w={40}><BarsIcon /></ToolBtn>
          <ToolBtn $w={40}><BarsIcon flip /></ToolBtn>
          <ToolBtn $w={99}>4  /  4</ToolBtn>
          <ToolBtn $w={95} $justify="space-between">
            <svg width="44" height="24" viewBox="0 0 44 24">
              <ellipse cx="10" cy="12" rx="8" ry="9" fill="none" stroke="#eee" strokeWidth="2.4" />
              <ellipse cx="32" cy="12" rx="9" ry="10" fill="#f2f2f2" />
            </svg>
            <Tri w={11} h={11} c="#e8e8e8" />
          </ToolBtn>
          <ToolBtn $w={105} $justify="space-between">
            1 Bar
            <Tri w={11} h={11} c="#e8e8e8" />
          </ToolBtn>
        </ToolGroup>

        <ToolGroup $ml={505}>
          <ToolBtn $w={50}>
            <svg width="40" height="24" viewBox="0 0 40 24">
              <polygon points="3,10 14,10 14,3 24,12 14,21 14,14 3,14" fill="#f2f2f2" />
              <rect x="28" y="10" width="3" height="4" fill="#ddd" />
              <rect x="34" y="10" width="3" height="4" fill="#ddd" />
            </svg>
          </ToolBtn>
          <Position w={195} values={['57 .', '1 .', '1']} />
        </ToolGroup>

        <ToolGroup $ml={48} $gap={25}>
          <svg width="30" height="36" viewBox="0 0 30 36"><polygon points="0,0 30,18 0,36" fill="#efefef" /></svg>
          <svg width="31" height="31" viewBox="0 0 31 31"><rect width="31" height="31" fill="#efefef" /></svg>
          <svg width="30" height="31" viewBox="0 0 30 31"><ellipse cx="15" cy="15.5" rx="15" ry="15.5" fill="#efefef" /></svg>
        </ToolGroup>

        <ToolGroup $ml={48}>
          <ToolBtn $w={40}><PathIcon d="M15 5V25M5 15H25" /></ToolBtn>
          <ToolBtn $w={40}>
            <svg width="30" height="30" viewBox="0 0 30 30">
              <circle cx="8" cy="22" r="4.5" fill="none" stroke="#ededed" strokeWidth="2.4" />
              <circle cx="21" cy="8" r="4.5" fill="none" stroke="#ededed" strokeWidth="2.4" />
              <path d="M11 18L18 12" stroke="#ededed" strokeWidth="2.4" />
            </svg>
          </ToolBtn>
          <ToolBtn $w={41}>
            <svg width="30" height="30" viewBox="0 0 30 30"><polygon points="6,15 16,6 16,12 25,12 25,18 16,18 16,24" fill="#777" /></svg>
          </ToolBtn>
          <ToolBtn $w={40}><PathIcon c="#777" sw={2.2} d="M11 5H6V11M19 5H24V11M11 25H6V19M19 25H24V19" /></ToolBtn>
          <ToolBtn $w={40}>
            <svg width="30" height="30" viewBox="0 0 30 30"><circle cx="15" cy="15" r="10" fill="none" stroke="#ededed" strokeWidth="2.4" /></svg>
          </ToolBtn>
        </ToolGroup>

        <ToolGroup $ml={55}>
          <Position w={195} values={['57 .', '1 .', '1']} />
          <ToolBtn $w={50}><PathIcon sw={2.8} d="M5 6H13L22 24H29" /></ToolBtn>
          <ToolBtn $w={50}>
            <svg width="34" height="32" viewBox="0 0 34 32">
              <path d="M10 23H4V4H30V23H20" fill="none" stroke="#ededed" strokeWidth="2.6" />
              <polygon points="21,17 21,30 11,23" fill="#ededed" />
            </svg>
          </ToolBtn>
          <ToolBtn $w={50}><PathIcon sw={2.8} d="M1 24H9L17 6H28" /></ToolBtn>
          <Position w={195} values={['120 .', '0 .', '0']} />
        </ToolGroup>

        <ToolGroup $ml={785} $gap={3}>
          <ToolBtn $w={42}>
            <svg width="30" height="34" viewBox="0 0 30 34">
              <polygon points="20,3 26,8 13,25 6,28 8,20" fill="#f2f2f2" />
              <rect x="3" y="30" width="24" height="3" fill="#f2f2f2" />
            </svg>
          </ToolBtn>
          <ToolBtn $w={41} $on><KeyIcon /></ToolBtn>
        </ToolGroup>
        <ToolGroup $ml={4}>
          <ToolBtn $w={62}>Key</ToolBtn>
          <SplitBtn $w={19} />
          <ToolBtn $w={67}>MIDI</ToolBtn>
          <ToolBtn $w={137} $justify="space-between">
            <PercentText>1 %</PercentText>
            <Tri w={11} h={11} c="#e8e8e8" />
          </ToolBtn>
          <ToolBtn $w={71} />
          <SplitBtn $w={20} />
        </ToolGroup>
      </Toolbar>

      <Main>
        <TopRow>
          <TopPanel>
            <OverviewRow>
              <OverviewStrip>
                <OverviewArt viewBox="140 0 3600 29">
                  {OVERVIEW.map(([a, b, y, h, c]) => (
                    <rect key={`${a}-${y}-${b}`} x={a} y={y} width={b - a} height={h} fill={c} />
                  ))}
                </OverviewArt>
                <Selection />
                <OverviewCursor />
              </OverviewStrip>
              <ZoomBtn $w={44} $ml={11}>H</ZoomBtn>
              <ZoomBtn $w={45} $ml={9}>W</ZoomBtn>
            </OverviewRow>
            <BarRuler>
              {BAR_NUMBERS.map((n) => (
                <BarMark key={n}>{n}</BarMark>
              ))}
            </BarRuler>
          </TopPanel>
          <SidePills>
            <SidePill>
              <svg width="28" height="32" viewBox="0 0 28 32">
                <rect x="1" y="2" width="26" height="7" fill={ORANGE} />
                <rect x="1" y="13" width="26" height="7" fill={ORANGE} />
                <rect x="1" y="24" width="26" height="7" fill={ORANGE} />
              </svg>
            </SidePill>
            <SidePill>
              <svg width="26" height="30" viewBox="0 0 26 30">
                <path d="M4 0V30M13 0V30M22 0V30" stroke="#6a6a6a" strokeWidth="4.5" />
              </svg>
            </SidePill>
          </SidePills>
        </TopRow>

        <LowerPanel>
          <Tracks>
            <TopStrip>
              <LocatorArea>
                <LocatorStrip>
                  <LoopBrace>
                    <svg width="24" height="22" viewBox="0 0 24 22">
                      <path d="M1 0V22M1 0L20 11L1 22" fill="none" stroke="#dcdcdc" strokeWidth="3" />
                    </svg>
                  </LoopBrace>
                </LocatorStrip>
                <DownMarker />
              </LocatorArea>
              <SetColumn>
                <SetPill>Set</SetPill>
                <SetRow>
                  <ArrowPill>
                    <svg width="18" height="18" viewBox="0 0 18 18"><polygon points="1,9 9,2 9,7 16,7 16,11 9,11 9,16" fill="#eee" /></svg>
                  </ArrowPill>
                  <ArrowPill>
                    <svg width="18" height="18" viewBox="0 0 18 18"><polygon points="17,9 9,2 9,7 2,7 2,11 9,11 9,16" fill="#eee" /></svg>
                  </ArrowPill>
                  <SquareBtn $ml={17}>
                    <svg width="22" height="22" viewBox="0 0 22 22">
                      <path d="M7 20C7 13 15 10 15 3" fill="none" stroke="#eee" strokeWidth="3" />
                    </svg>
                  </SquareBtn>
                  <SquareBtn>
                    <svg width="20" height="24" viewBox="0 0 20 24">
                      <rect x="2" y="10" width="16" height="13" fill="#eee" />
                      <path d="M6 10V6a4 4 0 0 1 8 0V10" fill="none" stroke="#eee" strokeWidth="2.5" />
                    </svg>
                  </SquareBtn>
                </SetRow>
              </SetColumn>
            </TopStrip>

            {TRACKS.map((t) => (
              <Track key={t.name} t={t} />
            ))}

            <TimeRuler>
              {TIMES.map((label) => (
                <TimeMark key={label}>{label}</TimeMark>
              ))}
              <UpMarker />
            </TimeRuler>
          </Tracks>

          <RightRail>
            <ScrollThumb />
            <ViewPill>I·O</ViewPill>
            <ViewPill>R</ViewPill>
            <ViewPill>M</ViewPill>
            <ViewPill $off>D</ViewPill>
          </RightRail>
        </LowerPanel>

        <BottomBar>
          <InfoField><InfoInner /></InfoField>
          <TrackName>Lowend</TrackName>
          <CollapsePill>
            <svg width="24" height="30" viewBox="0 0 24 30"><polygon points="24,0 24,30 0,15" fill="#6f6f6f" /></svg>
          </CollapsePill>
        </BottomBar>
      </Main>
    </Window>
  </Page>
);

export default App;
